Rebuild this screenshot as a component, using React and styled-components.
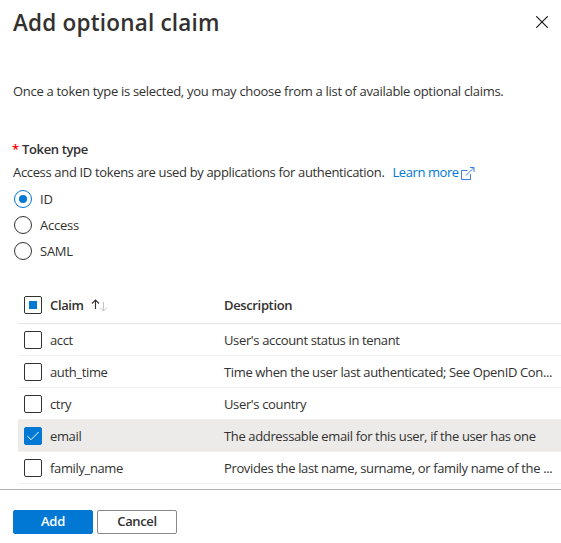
import React, { useState } from "react";
import styled, { createGlobalStyle } from "styled-components";

const GlobalStyle = createGlobalStyle`
  * { box-sizing: border-box; }
  body {
    margin: 0;
    background: #fff;
    color: #323130;
    font: 400 13px/18px "Open Sans", "Noto Sans", sans-serif;
    overflow: hidden;
  }
`;

const Panel = styled.div`
  width: 561px;
  height: 543px;
  display: flex;
  flex-direction: column;
  overflow: hidden;
`;

const Header = styled.header`
  height: 82px;
  padding: 6px 13px 0;
  display: flex;
  justify-content: space-between;
  align-items: flex-start;
`;

const Title = styled.h1`
  margin: 0;
  font-size: 22.5px;
  line-height: 34px;
  font-weight: 600;
  letter-spacing: 0.2px;
  white-space: nowrap;
`;

const CloseButton = styled.button`
  width: 12px;
  height: 12px;
  margin: 10px 0 0;
  padding: 0;
  border: 0;
  background: none;
  svg { display: block; }
`;

const Text = styled.span`
  display: inline-block;
  letter-spacing: ${(p) => p.$spacing ?? -0.36}px;
  white-space: nowrap;
`;

const Intro = styled.p`
  margin: 0;
  padding-left: 13px;
  height: 58px;
`;

const FieldLabel = styled.div`
  height: 23px;
  padding-left: 13px;
  font-weight: 600;
  display: flex;
  gap: 4px;
`;

const Required = styled.span`
  color: #f00;
  width: 5px;
  text-indent: -1px;
`;

const Hint = styled.div`
  height: 27px;
  padding-left: 13px;
  display: flex;
`;

const LearnMore = styled.a`
  color: #0078d4;
  margin-left: 8px;
  display: flex;
  svg { margin: 4px 0 0 2px; }
`;

const RadioGroup = styled.div`
  padding-left: 14px;
  display: flex;
  flex-direction: column;
  gap: 8px;
`;

const RadioOption = styled.div`
  display: flex;
  gap: 8px;
  height: 18px;
`;

const RadioMark = styled.span`
  width: 18px;
  height: 18px;
  border: 1px solid ${(p) => (p.$on ? "#0078d4" : "#323130")};
  border-radius: 50%;
  display: grid;
  place-items: center;
  &::after {
    content: "";
    width: 8px;
    height: 8px;
    border-radius: 50%;
    background: ${(p) => (p.$on ? "#0078d4" : "transparent")};
  }
`;

const Table = styled.div`
  margin: 27px 0 0 18px;
  height: 202px;
  flex: none;
`;

const Row = styled.div`
  display: grid;
  grid-template-columns: 26px 174px 329px;
  height: ${(p) => (p.$head ? 37 : 32)}px;
  padding: ${(p) => (p.$head ? 9 : 7)}px 0 0 6px;
  border-bottom: 1px solid ${(p) => (p.$head ? "#e6e6e6" : "#f0f0f0")};
  background: ${(p) => (p.$selected ? "#edebe9" : "transparent")};
  font-weight: ${(p) => (p.$head ? 600 : 400)};
`;

const Cell = styled.div`
  display: flex;
  gap: 7px;
  white-space: nowrap;
  svg { margin-top: 2px; }
`;

const CheckMark = styled.span`
  width: 18px;
  height: 18px;
  border: 1px solid ${(p) => (p.$on ? "#0078d4" : "#323130")};
  border-radius: 2px;
  background: ${(p) => (p.$on ? "#0078d4" : "#fff")};
  display: grid;
  place-items: center;
`;

const Partial = styled.span`
  width: 8px;
  height: 8px;
  background: #0078d4;
`;

const Footer = styled.footer`
  margin-top: auto;
  height: 54px;
  flex: none;
  border-top: 1px solid #b3b3b3;
  padding: 20px 13px 0;
  display: flex;
  gap: 4px;
`;

const Button = styled.button`
  width: 80px;
  height: 24px;
  padding: 0 0 2px;
  border: 1px solid ${(p) => (p.$primary ? "#0078d4" : "#8a8886")};
  border-radius: 2px;
  background: ${(p) => (p.$primary ? "#0078d4" : "#fff")};
  color: ${(p) => (p.$primary ? "#fff" : "#323130")};
  font: 600 13px/20px "Open Sans", "Noto Sans", sans-serif;
`;

const claims = [
  { name: "acct", text: "User's account status in tenant" },
  { name: "auth_time", text: "Time when the user last authenticated; See OpenID Con..." },
  { name: "ctry", text: "User's country" },
  { name: "email", text: "The addressable email for this user, if the user has one" },
  { name: "family_name", text: "Provides the last name, surname, or family name of the ..." },
];

const tokenTypes = ["ID", "Access", "SAML"];

export default function App() {
  const [token, setToken] = useState("ID");
  const [selected, setSelected] = useState(["email"]);
  const toggle = (name) =>
    setSelected((s) => (s.includes(name) ? s.filter((n) => n !== name) : [...s, name]));

  return (
    <>
      <GlobalStyle />
      <Panel>
        <Header>
          <Title>Add optional claim</Title>
          <CloseButton aria-label="Close">
            <svg width="12" height="12" viewBox="0 0 12 12" stroke="#111" strokeWidth="1.1">
              <path d="M.3.3 11.7 11.7M11.7.3.3 11.7" />
            </svg>
          </CloseButton>
        </Header>
        <Intro>
          <Text $spacing={-0.295}>
            Once a token type is selected, you may choose from a list of available optional claims.
          </Text>
        </Intro>
        <FieldLabel>
          <Required>*</Required>
          <Text>Token type</Text>
        </FieldLabel>
        <Hint>
          <Text $spacing={-0.34}>Access and ID tokens are used by applications for authentication.</Text>
          <LearnMore>
            <Text $spacing={-0.42}>Learn more</Text>
            <svg width="14" height="13" viewBox="0 0 14 13" fill="none" stroke="#3b7de0">
              <path d="M6.5 3.5h-6v9h9V7" />
              <path d="M5 8.5 12.7.8M9 .5h4V5" />
            </svg>
          </LearnMore>
        </Hint>
        <RadioGroup>
          {tokenTypes.map((t) => (
            <RadioOption key={t} onClick={() => setToken(t)}>
              <RadioMark $on={token === t} />
              <Text $spacing={-0.25}>{t}</Text>
            </RadioOption>
          ))}
        </RadioGroup>
        <Table>
          <Row $head>
            <CheckMark>
              <Partial />
            </CheckMark>
            <Cell>
              <Text>Claim</Text>
              <svg width="17" height="14" viewBox="0 0 17 14" fill="none">
                <path d="M4.5 11V2M1 5.5 4.5 2 8 5.5" stroke="#323130" strokeWidth="1.1" />
                <path d="M12.5 4v8.5M9 9.5l3.5 3.5L16 9.5" stroke="#c4c4c4" />
              </svg>
            </Cell>
            <Text>Description</Text>
          </Row>
          {claims.map((c) => {
            const on = selected.includes(c.name);
            return (
              <Row key={c.name} $selected={on} onClick={() => toggle(c.name)}>
                <CheckMark $on={on}>
                  {on && (
                    <svg width="14" height="10" viewBox="0 0 14 10" fill="none" stroke="#fff">
                      <path d="M1.3 5 5 8.7 12.7 1" />
                    </svg>
                  )}
                </CheckMark>
                <Cell>
                  <Text>{c.name}</Text>
                </Cell>
                <Text>{c.text}</Text>
              </Row>
            );
          })}
        </Table>
        <Footer>
          <Button $primary>
            <Text $spacing={-0.2}>Add</Text>
          </Button>
          <Button>
            <Text>Cancel</Text>
          </Button>
        </Footer>
      </Panel>
    </>
  );
}
